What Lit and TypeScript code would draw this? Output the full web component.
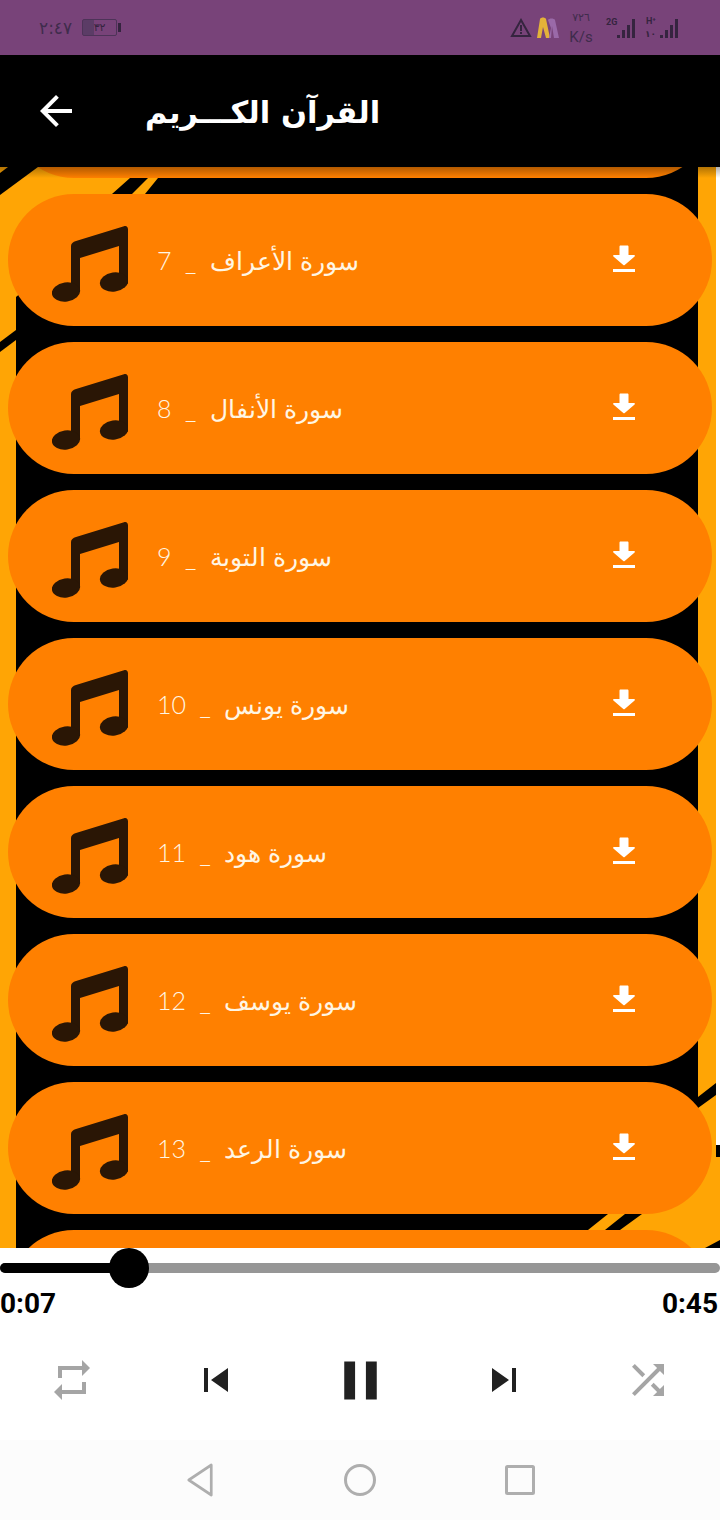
import { LitElement, html, css, svg } from "lit";
import { customElement } from "lit/decorators.js";

const rows = [
  ["سورة الأنعام", "6"],
  ["سورة الأعراف", "7"],
  ["سورة الأنفال", "8"],
  ["سورة التوبة", "9"],
  ["سورة يونس", "10"],
  ["سورة هود", "11"],
  ["سورة يوسف", "12"],
  ["سورة الرعد", "13"],
  ["سورة إبراهيم", "14"],
];

const icon = (d: string, size: number, cls: string) => html`<svg class=${cls} width=${size} height=${size} viewBox="0 0 24 24"><path d=${d} fill="currentColor"></path></svg>`;

@customElement("app-root")
export class AppRoot extends LitElement {
  static styles = css`
    :host { display: block; width: 720px; height: 1520px; overflow: hidden; background: #fff; font-family: "Roboto", "DejaVu Sans", sans-serif; }
    .page { display: flex; flex-direction: column; height: 1520px; }
    .status { height: 55px; background: #784379; display: flex; align-items: center; justify-content: space-between; padding: 0 39px 0 39px; color: #35243f; box-sizing: border-box; }
    .status-left, .status-right { display: flex; align-items: center; }
    .clock { font: 17px "DejaVu Sans", sans-serif; letter-spacing: 0.5px; margin-right: 10px; color: #3f2c4c; }
    .battery { width: 35px; height: 17px; border: 1.5px solid #4d3358; border-radius: 2px; box-sizing: border-box; display: flex; align-items: center; justify-content: center; font: 11px "DejaVu Sans", sans-serif; background: linear-gradient(90deg, #5b3c66 0 34%, transparent 34%); }
    .nub { width: 3px; height: 9px; background: #35243f; margin-left: 1px; }
    .speed { font: 15px/17px "Roboto", "DejaVu Sans", sans-serif; color: #3f2c4c; display: flex; flex-direction: column; align-items: center; gap: 4px; width: 24px; margin: 0 12px 0 9px; }
    .speed span:first-child { font: 11px/15px "DejaVu Sans", sans-serif; }
    .sig { margin-left: 8px; }
    .warn { margin-right: 4px; }
    .header { height: 112px; background: #000; color: #fff; display: flex; align-items: center; padding-left: 32px; }
    .back { margin-right: 65px; flex: none; }
    .title { font: 700 30.5px "DejaVu Sans", sans-serif; white-space: pre; padding-top: 2px; }
    .list { position: relative; height: 1081px; overflow: hidden; background: #000; }
    .bg { position: absolute; left: 0; top: 0; }
    .shade { position: absolute; left: 0; top: 0; width: 100%; height: 11px; background: linear-gradient(180deg, rgba(0,0,0,.3), rgba(0,0,0,0)); }
    .rows { position: relative; display: flex; flex-direction: column; gap: 16px; padding: 0 8px; margin-top: -121px; }
    .row { height: 132px; border-radius: 66px; background: #ff8000; display: flex; align-items: center; flex: none; position: relative; }
    .note { margin-left: 44px; margin-top: 8px; flex: none; color: #2a1605; }
    .name { margin-left: 29px; color: #fff6e4; font: 300 25px "Lato", "DejaVu Sans", sans-serif; white-space: pre; direction: rtl; }
    .dl { margin-left: auto; margin-right: 76px; margin-bottom: 2px; flex: none; color: #fff; }
    .player { height: 192px; background: #fff; display: flex; flex-direction: column; }
    .slider { height: 40px; position: relative; display: flex; align-items: center; flex: none; }
    .track { width: 100%; height: 10px; border-radius: 5px; background: #969696; }
    .fill { position: absolute; left: 0; width: 129px; height: 10px; border-radius: 5px 0 0 5px; background: #000; }
    .thumb { position: absolute; left: 109px; top: 0; width: 40px; height: 40px; border-radius: 50%; background: #000; }
    .times { display: flex; justify-content: space-between; padding: 0 2px 0 0; font: 700 28px/32px "Roboto", sans-serif; color: #000; }
    .controls { display: grid; grid-template-columns: repeat(5, 144px); justify-items: center; align-items: center; height: 72px; margin-top: 24px; }
    .grey { color: #a5a5a5; }
    .dark { color: #212121; }
    .nav { height: 80px; background: #fcfcfc; display: flex; align-items: center; justify-content: center; gap: 120px; }
  `;

  render() {
    return html`<div class="page">
      <div class="status">
        <div class="status-left">
          <span class="clock" dir="rtl">٢:٤٧</span>
          <span class="battery">٣٢</span><span class="nub"></span>
        </div>
        <div class="status-right">
          <svg class="warn" width="22" height="20" viewBox="0 0 22 20"><path d="M11 2 20 18H2Z" fill="none" stroke="#35243f" stroke-width="2"/><path d="M10 7h2v6h-2zM10 14h2v2h-2z" fill="#35243f"/></svg>
          <svg width="24" height="24" viewBox="0 0 24 24"><path d="M1 22 4 3c1-2 5-2 6 0l4 19h-4L7 11l-2 11Z" fill="#e3b239"/><path d="M12 4c1-2 6-2 7 0l4 18h-5l-2-12-1 12h-2l2-10-3-8Z" fill="#9a6aa8"/></svg>
          <div class="speed"><span>٧٢٦</span><span>K/s</span></div>
          <svg width="32" height="24" viewBox="0 0 32 24">
            <text x="1" y="9" font-family="Roboto" font-weight="700" font-size="9" fill="#35243f">2G</text>
            <path d="M12 19h3v3h-3zM17 14h3v8h-3zM22 9h3v13h-3zM27 3h3v19h-3z" fill="#35243f"/>
          </svg>
          <svg class="sig" width="36" height="24" viewBox="0 0 36 24">
            <text x="1" y="8" font-family="Roboto" font-weight="700" font-size="9" fill="#35243f">H⁺</text>
            <text x="0" y="21" font-family="DejaVu Sans" font-weight="700" font-size="9" fill="#35243f">١٠</text>
            <path d="M15 19h3v3h-3zM20 14h3v8h-3zM25 9h3v13h-3zM30 3h3v19h-3z" fill="#35243f"/>
          </svg>
        </div>
      </div>
      <div class="header">
        ${icon("M20 11H7.83l5.59-5.59L12 4l-8 8 8 8 1.41-1.41L7.83 13H20v-2z", 48, "back")}
        <span class="title" dir="rtl">القرآن الكـــريم</span>
      </div>
      <div class="list">
        <svg class="bg" width="720" height="1081" viewBox="0 0 720 1081">
          ${svg`<rect width="720" height="1081" fill="#000"/>
          <path d="M0 0H148L130 11 112 27 100 60 16 130V1081H0Z" fill="#ffa505"/>
          <path d="M8 0H38L0 28V6Z" fill="#000"/>
          <path d="M132 27 148 11H158L145 27Z" fill="#ffa505"/>
          <path d="M0 175 16 163V173L0 185Z" fill="#000"/>
          <path d="M698 0H716V916L698 930Z" fill="#ffa505"/>
          <rect x="716" y="0" width="4" height="978" fill="#fff"/>
          <path d="M588 1063 608 1047H625L605 1063Z" fill="#ffa505"/>
          <path d="M620 1063 642 1047 680 1000 698 941 716 928V978H720V1073L705 1081H620Z" fill="#ffa505"/>
          <rect x="716" y="978" width="4" height="12" fill="#000"/>`}
        </svg>
        <div class="rows">
          ${rows.map(([n, k]) => html`<div class="row">
            <svg class="note" width="76" height="76" viewBox="0 0 76 76">
              <path d="M24 15 72 0.3C74.5-.4 76 1 76 3.5V58L67 52V20L28 32V66L19 62V20C19 17.5 21 16 24 15Z" fill="currentColor"/>
              <ellipse cx="14" cy="66" rx="14.2" ry="9.6" transform="rotate(-8 14 66)" fill="currentColor"/>
              <ellipse cx="62" cy="56" rx="14.2" ry="9.6" transform="rotate(-8 62 56)" fill="currentColor"/>
            </svg>
            <span class="name" dir="rtl">${n}  _  ${k}</span>
            <svg class="dl" width="24" height="28" viewBox="0 0 24 28">
              <path d="M7.5 1.5C7.5 1 8 .5 8.5.5h7c.5 0 1 .5 1 1V10h5.5c1 0 1.2.8.6 1.4L12.7 20c-.4.4-1 .4-1.4 0L1.4 11.4C.8 10.8 1 10 2 10h5.5Z" fill="currentColor"/>
              <rect x="1" y="24" width="22" height="3" fill="currentColor"/>
            </svg>
          </div>`)}
        </div>
        <div class="shade"></div>
      </div>
      <div class="player">
        <div class="slider"><div class="track"></div><div class="fill"></div><div class="thumb"></div></div>
        <div class="times"><span>0:07</span><span>0:45</span></div>
        <div class="controls">
          ${icon("M7 7h10v3l4-4-4-4v3H5v6h2V7zm10 10H7v-3l-4 4 4 4v-3h12v-6h-2v4z", 48, "grey")}
          ${icon("M6 6h2v12H6zm3.5 6l8.5 6V6z", 48, "dark")}
          ${icon("M6 19h4V5H6v14zm8-14v14h4V5h-4z", 65, "dark")}
          ${icon("M6 18l8.5-6L6 6v12zM16 6v12h2V6h-2z", 48, "dark")}
          ${icon("M10.59 9.17L5.41 4 4 5.41l5.17 5.17 1.42-1.41zM14.5 4l2.04 2.04L4 18.59 5.41 20 17.96 7.46 20 9.5V4h-5.5zm.33 9.41l-1.41 1.41 3.13 3.13L14.5 20H20v-5.5l-2.04 2.04-3.13-3.13z", 48, "grey")}
        </div>
      </div>
      <div class="nav">
        <svg width="40" height="40" viewBox="0 0 40 40"><path d="M32.5 5 7.5 20 32.5 35Z" transform="translate(2 0) scale(.9 1)" fill="none" stroke="#aeaeae" stroke-width="3" stroke-linejoin="round"/></svg>
        <svg width="40" height="40" viewBox="0 0 40 40"><circle cx="20" cy="20" r="14.5" fill="none" stroke="#aeaeae" stroke-width="3"/></svg>
        <svg width="40" height="40" viewBox="0 0 40 40"><rect x="6.5" y="6.5" width="27" height="27" rx="1" fill="none" stroke="#aeaeae" stroke-width="3"/></svg>
      </div>
    </div>`;
  }
}
